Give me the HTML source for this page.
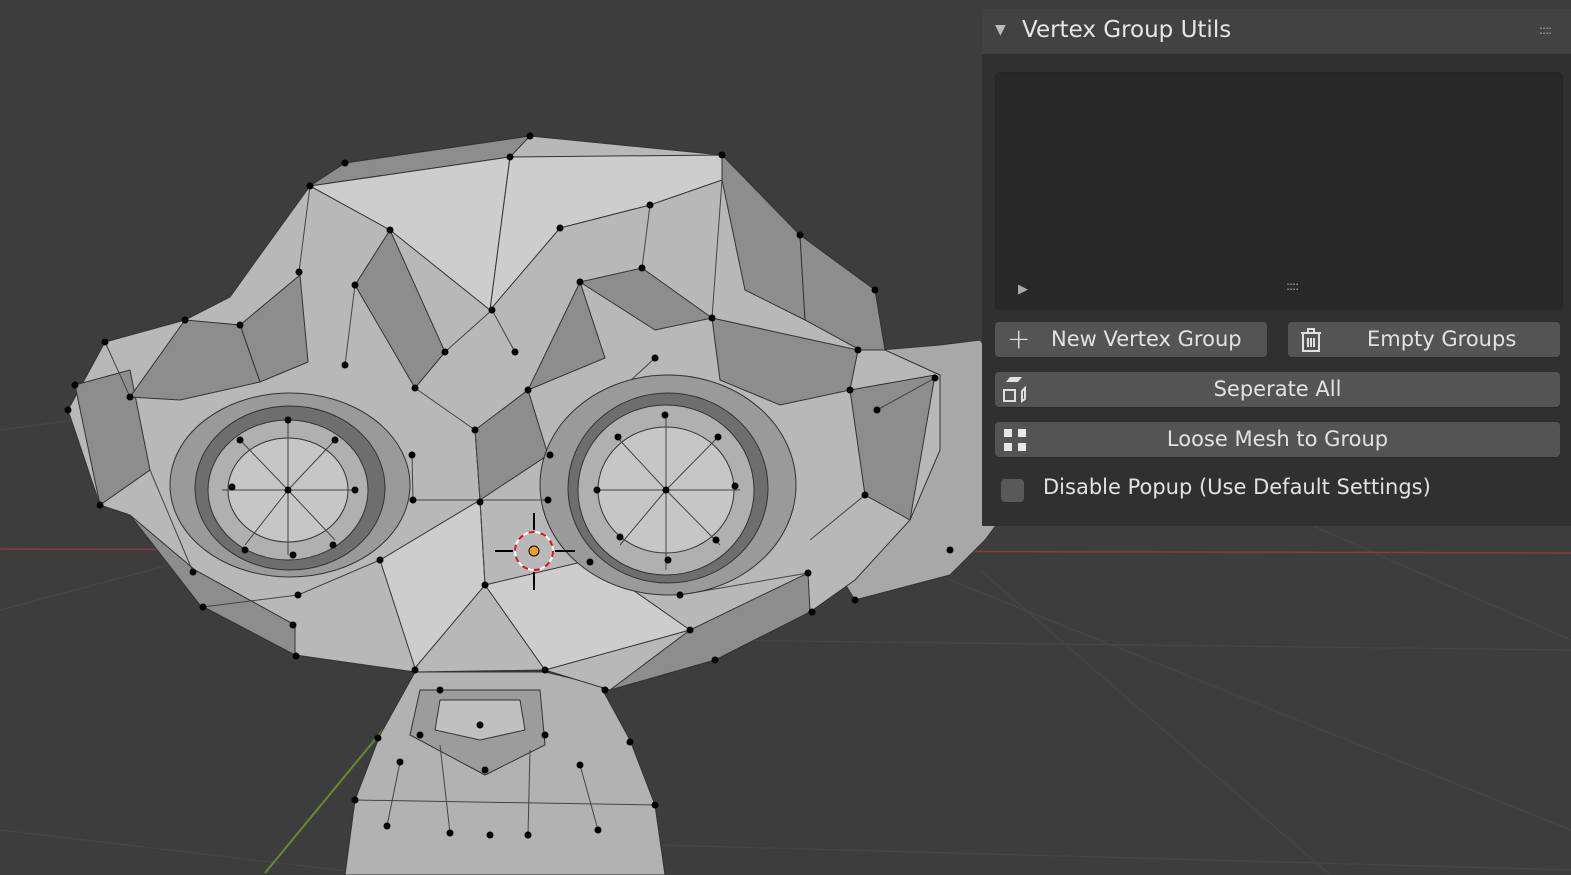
<!DOCTYPE html>
<html><head><meta charset="utf-8">
<style>
html,body{margin:0;padding:0;width:1571px;height:875px;overflow:hidden;background:#3d3d3d;font-family:"DejaVu Sans","Liberation Sans",sans-serif}
#vp{position:absolute;left:0;top:0}
.panel{position:absolute;left:982px;top:9px;width:589px;height:517px;background:#303030}
.hdr{position:absolute;left:0;top:0;width:589px;height:45px;background:#424242;color:#e6e6e6;font-size:23px}
.hdr .t{position:absolute;left:40px;top:8px}
.hdr .tri{position:absolute;left:13px;top:13px;font-size:14px;color:#bbb}
.grip{position:absolute;color:#aaa;font-size:12px;letter-spacing:-1px}
.list{position:absolute;left:13px;top:63px;width:566px;height:236px;background:#282828;border:1px solid #252525;border-radius:5px}
.btn{position:absolute;height:35px;background:#545454;border-radius:4px;color:#e2e2e2;font-size:21px;line-height:35px;text-align:center;box-shadow:0 1px 0 #2a2a2a}
.chk{position:absolute;left:19px;top:470px;width:23px;height:23px;background:#595959;border-radius:4px}
.lbl{position:absolute;left:61px;top:466px;color:#e2e2e2;font-size:21px}
</style></head><body>
<svg id="vp" width="1571" height="875" viewBox="0 0 1571 875">
<g stroke="#464646" stroke-width="1.2" fill="none">
<line x1="0" y1="430" x2="300" y2="390"/><line x1="0" y1="610" x2="300" y2="530"/>
<line x1="900" y1="560" x2="1571" y2="830"/><line x1="1300" y1="520" x2="1571" y2="640"/>
<line x1="980" y1="570" x2="1330" y2="875"/><line x1="0" y1="830" x2="380" y2="875"/>
<line x1="700" y1="640" x2="1571" y2="650"/><line x1="660" y1="845" x2="1571" y2="870"/>
</g>
<line x1="0" y1="549" x2="1571" y2="553" stroke="#8a3a45" stroke-width="1.5"/>
<line x1="265" y1="873" x2="490" y2="600" stroke="#6a8a2a" stroke-width="2"/>
<polygon points="880,350 940,345 980,340 1010,380 1015,500 985,540 950,575 855,600 830,560" fill="#a8a8a8" stroke="#333"/>
<polygon points="415,672 545,672 600,685 630,740 655,805 665,875 345,875 355,800 380,735" fill="#b2b2b2" stroke="#333"/>
<polygon points="420,690 540,690 545,745 485,775 410,735" fill="#9c9c9c" stroke="#333"/>
<polygon points="440,700 520,700 525,730 480,740 435,730" fill="#c0c0c0" stroke="#333"/>
<g stroke="#444" fill="none"><line x1="387" y1="826" x2="400" y2="762"/><line x1="450" y1="833" x2="440" y2="745"/><line x1="528" y1="835" x2="530" y2="750"/><line x1="598" y1="830" x2="580" y2="765"/><line x1="355" y1="800" x2="655" y2="805"/></g>
<polygon points="68,410 105,342 185,320 230,297 255,262 310,186 345,163 530,136 722,155 800,235 875,290 885,350 940,375 940,450 910,520 855,580 810,612 715,660 610,690 545,670 415,672 295,655 200,605 130,515 100,505" fill="#b8b8b8" stroke="#333"/>
<g fill="#8d8d8d" stroke="#333" stroke-width="1">
<polygon points="310,186 345,163 530,136 510,157"/>
<polygon points="722,155 800,235 805,320 745,290 722,180"/>
<polygon points="800,235 875,290 885,350 860,350 805,320"/>
<polygon points="355,285 390,230 445,352 415,388"/>
<polygon points="580,282 642,268 712,318 655,330"/>
<polygon points="528,390 580,282 605,358"/>
<polygon points="240,325 300,275 308,362 260,382"/>
<polygon points="75,385 130,370 150,470 100,505"/>
<polygon points="850,390 935,375 910,520 865,495"/>
<polygon points="130,515 200,605 295,655 295,625 195,570"/>
<polygon points="610,690 715,660 810,612 808,573 690,630"/>
<polygon points="475,430 528,390 548,455 480,500"/>
<polygon points="185,320 240,325 260,382 180,400 130,397"/>
<polygon points="712,318 858,350 850,390 780,405 720,380"/>
</g>
<g fill="#cdcdcd" stroke="#333" stroke-width="1">
<polygon points="310,186 510,157 490,310 390,230"/>
<polygon points="510,157 722,155 722,180 650,205 560,228 490,310"/>
<polygon points="380,560 480,500 485,585 415,668"/>
<polygon points="485,585 590,560 690,630 545,670"/>
</g>
<g stroke="#444" fill="none">
<line x1="299" y1="272" x2="310" y2="186"/><line x1="355" y1="285" x2="345" y2="365"/><line x1="445" y1="352" x2="492" y2="310"/><line x1="492" y1="310" x2="515" y2="352"/><line x1="642" y1="268" x2="650" y2="205"/><line x1="712" y1="318" x2="722" y2="180"/><line x1="105" y1="342" x2="130" y2="397"/><line x1="415" y1="388" x2="475" y2="430"/><line x1="413" y1="500" x2="412" y2="455"/><line x1="550" y1="455" x2="655" y2="358"/><line x1="203" y1="607" x2="298" y2="595"/><line x1="298" y1="595" x2="380" y2="560"/><line x1="680" y1="595" x2="808" y2="573"/><line x1="877" y1="410" x2="935" y2="378"/><line x1="865" y1="495" x2="810" y2="540"/><line x1="150" y1="470" x2="193" y2="572"/>
</g>
<ellipse cx="290" cy="485" rx="120" ry="92" fill="#9a9a9a" stroke="#333"/>
<ellipse cx="290" cy="488" rx="95" ry="82" fill="#6e6e6e" stroke="#333"/>
<ellipse cx="288" cy="490" rx="80" ry="70" fill="#b0b0b0" stroke="#333"/>
<ellipse cx="288" cy="490" rx="60" ry="52" fill="#c6c6c6" stroke="#333"/>
<ellipse cx="668" cy="485" rx="128" ry="110" fill="#9a9a9a" stroke="#333"/>
<ellipse cx="668" cy="488" rx="100" ry="95" fill="#6e6e6e" stroke="#333"/>
<ellipse cx="666" cy="490" rx="88" ry="85" fill="#b0b0b0" stroke="#333"/>
<ellipse cx="666" cy="490" rx="68" ry="63" fill="#c6c6c6" stroke="#333"/>
<g stroke="#444" stroke-width="1">
<line x1="288" y1="490" x2="288" y2="420"/><line x1="288" y1="490" x2="355" y2="490"/><line x1="288" y1="490" x2="222" y2="490"/><line x1="288" y1="490" x2="288" y2="555"/><line x1="288" y1="490" x2="240" y2="440"/><line x1="288" y1="490" x2="335" y2="440"/><line x1="288" y1="490" x2="245" y2="545"/><line x1="288" y1="490" x2="335" y2="540"/>
<line x1="666" y1="490" x2="666" y2="412"/><line x1="666" y1="490" x2="740" y2="490"/><line x1="666" y1="490" x2="595" y2="490"/><line x1="666" y1="490" x2="666" y2="570"/><line x1="666" y1="490" x2="615" y2="435"/><line x1="666" y1="490" x2="720" y2="435"/><line x1="666" y1="490" x2="620" y2="545"/><line x1="666" y1="490" x2="720" y2="545"/>
<line x1="480" y1="500" x2="545" y2="500"/><line x1="413" y1="500" x2="480" y2="500"/><line x1="475" y1="430" x2="480" y2="500"/><line x1="480" y1="500" x2="485" y2="585"/>
</g>
<g fill="#000">
<circle cx="530" cy="136" r="3.5"/><circle cx="722" cy="155" r="3.5"/><circle cx="510" cy="157" r="3.5"/><circle cx="345" cy="163" r="3.5"/><circle cx="310" cy="186" r="3.5"/><circle cx="390" cy="230" r="3.5"/><circle cx="560" cy="228" r="3.5"/><circle cx="650" cy="205" r="3.5"/><circle cx="800" cy="235" r="3.5"/><circle cx="875" cy="290" r="3.5"/><circle cx="299" cy="272" r="3.5"/><circle cx="355" cy="285" r="3.5"/><circle cx="580" cy="282" r="3.5"/><circle cx="642" cy="268" r="3.5"/><circle cx="492" cy="310" r="3.5"/><circle cx="712" cy="318" r="3.5"/><circle cx="240" cy="325" r="3.5"/><circle cx="185" cy="320" r="3.5"/><circle cx="105" cy="342" r="3.5"/><circle cx="445" cy="352" r="3.5"/><circle cx="515" cy="352" r="3.5"/><circle cx="345" cy="365" r="3.5"/><circle cx="655" cy="358" r="3.5"/><circle cx="858" cy="350" r="3.5"/><circle cx="75" cy="385" r="3.5"/><circle cx="130" cy="397" r="3.5"/><circle cx="415" cy="388" r="3.5"/><circle cx="528" cy="390" r="3.5"/><circle cx="850" cy="390" r="3.5"/><circle cx="475" cy="430" r="3.5"/><circle cx="550" cy="455" r="3.5"/><circle cx="412" cy="455" r="3.5"/><circle cx="288" cy="490" r="3.5"/><circle cx="666" cy="490" r="3.5"/><circle cx="480" cy="502" r="3.5"/><circle cx="413" cy="500" r="3.5"/><circle cx="548" cy="500" r="3.5"/><circle cx="232" cy="487" r="3.5"/><circle cx="355" cy="490" r="3.5"/><circle cx="597" cy="490" r="3.5"/><circle cx="735" cy="486" r="3.5"/><circle cx="288" cy="420" r="3.5"/><circle cx="665" cy="415" r="3.5"/><circle cx="240" cy="440" r="3.5"/><circle cx="335" cy="440" r="3.5"/><circle cx="618" cy="437" r="3.5"/><circle cx="718" cy="437" r="3.5"/><circle cx="245" cy="550" r="3.5"/><circle cx="333" cy="545" r="3.5"/><circle cx="293" cy="555" r="3.5"/><circle cx="620" cy="537" r="3.5"/><circle cx="716" cy="540" r="3.5"/><circle cx="668" cy="560" r="3.5"/><circle cx="485" cy="585" r="3.5"/><circle cx="380" cy="560" r="3.5"/><circle cx="590" cy="562" r="3.5"/><circle cx="298" cy="595" r="3.5"/><circle cx="680" cy="595" r="3.5"/><circle cx="193" cy="572" r="3.5"/><circle cx="808" cy="573" r="3.5"/><circle cx="203" cy="607" r="3.5"/><circle cx="293" cy="625" r="3.5"/><circle cx="690" cy="630" r="3.5"/><circle cx="812" cy="612" r="3.5"/><circle cx="296" cy="656" r="3.5"/><circle cx="715" cy="660" r="3.5"/><circle cx="415" cy="670" r="3.5"/><circle cx="545" cy="670" r="3.5"/><circle cx="100" cy="505" r="3.5"/><circle cx="68" cy="410" r="3.5"/><circle cx="865" cy="495" r="3.5"/><circle cx="877" cy="410" r="3.5"/><circle cx="605" cy="690" r="3.5"/><circle cx="440" cy="690" r="3.5"/><circle cx="480" cy="725" r="3.5"/><circle cx="420" cy="735" r="3.5"/><circle cx="545" cy="735" r="3.5"/><circle cx="485" cy="770" r="3.5"/><circle cx="400" cy="762" r="3.5"/><circle cx="580" cy="765" r="3.5"/><circle cx="355" cy="800" r="3.5"/><circle cx="655" cy="805" r="3.5"/><circle cx="387" cy="826" r="3.5"/><circle cx="450" cy="833" r="3.5"/><circle cx="490" cy="835" r="3.5"/><circle cx="528" cy="835" r="3.5"/><circle cx="598" cy="830" r="3.5"/><circle cx="630" cy="742" r="3.5"/><circle cx="378" cy="738" r="3.5"/><circle cx="935" cy="378" r="3.5"/><circle cx="950" cy="550" r="3.5"/><circle cx="855" cy="600" r="3.5"/>
</g>
<circle cx="534" cy="551" r="19" fill="none" stroke="#fff" stroke-width="2"/>
<circle cx="534" cy="551" r="19" fill="none" stroke="#e01010" stroke-width="2" stroke-dasharray="6 6"/>
<g stroke="#000" stroke-width="2"><line x1="534" y1="513" x2="534" y2="530"/><line x1="534" y1="572" x2="534" y2="590"/><line x1="495" y1="551" x2="513" y2="551"/><line x1="555" y1="551" x2="575" y2="551"/></g>
<circle cx="534" cy="551" r="5" fill="#f0a020" stroke="#000"/>
</svg>

<div class="panel">
  <div class="hdr"><span class="tri">▼</span><span class="t">Vertex Group Utils</span><span class="grip" style="left:557px;top:14px">::::</span></div>
  <div class="list">
    <span style="position:absolute;left:22px;top:209px;color:#aaa;font-size:13px">▶</span>
    <span class="grip" style="left:290px;top:206px">::::</span>
  </div>
  <div class="btn" style="left:13px;top:313px;width:272px">
    <span style="position:absolute;left:12px;top:-1px;font-size:28px;font-weight:300">+</span>
    <span style="position:absolute;left:56px">New Vertex Group</span>
  </div>
  <div class="btn" style="left:306px;top:313px;width:272px">
    <svg style="position:absolute;left:11px;top:5px" width="24" height="26" viewBox="0 0 24 26"><g fill="none" stroke="#e0e0e0" stroke-width="2"><line x1="2" y1="6" x2="22" y2="6"/><path d="M9 6V2h6v4"/><path d="M4 6v18h16V6"/><line x1="9" y1="11" x2="9" y2="20"/><line x1="12" y1="11" x2="12" y2="20"/><line x1="15" y1="11" x2="15" y2="20"/></g></svg>
    <span style="position:absolute;left:79px">Empty Groups</span>
  </div>
  <div class="btn" style="left:13px;top:363px;width:565px">
    <svg style="position:absolute;left:7px;top:4px" width="30" height="28" viewBox="0 0 30 28"><g fill="#e0e0e0"><polygon points="4,6 8,1 20,1 16,6"/></g><g fill="none" stroke="#e0e0e0" stroke-width="2"><rect x="2" y="14" width="11" height="11"/><path d="M20 25l3-2V12l-3 3z"/></g></svg>
    Seperate All
  </div>
  <div class="btn" style="left:13px;top:413px;width:565px">
    <svg style="position:absolute;left:9px;top:7px" width="24" height="24" viewBox="0 0 24 24"><g fill="#e8e8e8"><rect x="0" y="0" width="8" height="8"/><rect x="14" y="0" width="8" height="8"/><rect x="0" y="14" width="8" height="8"/><rect x="14" y="14" width="8" height="8"/></g></svg>
    Loose Mesh to Group
  </div>
  <div class="chk"></div>
  <div class="lbl">Disable Popup (Use Default Settings)</div>
</div>
</body></html>
